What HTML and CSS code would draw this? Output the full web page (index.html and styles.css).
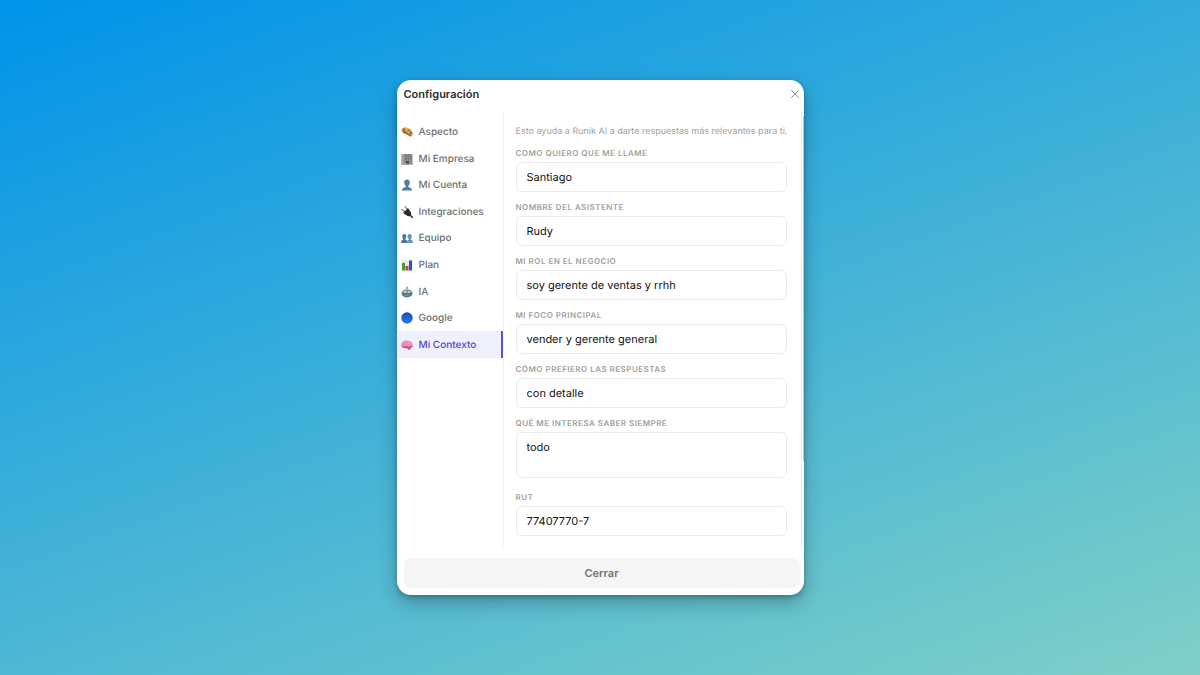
FILE: index.html
```html
<!DOCTYPE html>
<html lang="es">
<head>
    <meta charset="UTF-8">
    <meta name="viewport" content="width=device-width, initial-scale=1.0">
    <title>Configuración</title>
    <link rel="stylesheet" href="styles.css">
</head>
<body>
    <main class="modal">
        <header class="modal-header">
            <h1 class="modal-title">Configuración</h1>
            <button class="modal-close" type="button" aria-label="Cerrar ventana">
                <svg viewBox="0 0 10 10" width="10" height="10"><path d="M1.5 1.5l7 7M8.5 1.5l-7 7" stroke="#8a8a8a" stroke-width="1" fill="none" stroke-linecap="round"/></svg>
            </button>
        </header>

        <div class="modal-body">
            <nav class="tabs">
                <button class="tab" type="button">
                    <svg class="tab-icon" viewBox="0 0 24 24">
                        <path d="M1 7C4 1 13 2 18 6c5 4 7 9 5 13-2 3-6 1-7-1-1-2-1-2-3-2-3 1-6 1-9-2C2 12 0 10 1 7z" fill="#d99a4e"/>
                        <circle cx="6" cy="7" r="2.4" fill="#e5482f"/>
                        <circle cx="11" cy="6" r="2.2" fill="#f4c430"/>
                        <circle cx="16" cy="9" r="2.2" fill="#48a845"/>
                        <circle cx="20" cy="14" r="2.2" fill="#7a4fb0"/>
                        <path d="M6 11l13 9" stroke="#8a4b24" stroke-width="2.4" stroke-linecap="round"/>
                        <path d="M2 9l6 3-3 2z" fill="#4b9b3d"/>
                    </svg>
                    Aspecto
                </button>
                <button class="tab" type="button">
                    <svg class="tab-icon" viewBox="0 0 24 24">
                        <path d="M1 2h22v21H1z" fill="#85888d"/>
                        <path d="M1 2h5v21H1z" fill="#a4a7ab"/>
                        <path d="M8 5h3v3H8zM13 5h3v3h-3zM18 5h2v3h-2zM8 10h3v3H8zM13 10h3v3h-3zM18 10h2v3h-2z" fill="#73777e"/>
                        <path d="M10 16h6v7h-6z" fill="#4a4b51"/>
                        <path d="M0 21h24v2H0z" fill="#a4a19c"/>
                    </svg>
                    Mi Empresa
                </button>
                <button class="tab" type="button">
                    <svg class="tab-icon" viewBox="0 0 24 24">
                        <path d="M12 1c4 0 6 3 5.500 7-.3 3-1.500 5-3 6v2c4 1 7 2 8 7H1.500c1-5 4-6 8-7v-2c-1.500-1-2.700-3-3-6C6 4 8 1 12 1z" fill="#527b9d"/>
                    </svg>
                    Mi Cuenta
                </button>
                <button class="tab" type="button">
                    <svg class="tab-icon" viewBox="0 0 24 24">
                        <path d="M2 7l5 4M8 1l4 5" stroke="#7b7b7b" stroke-width="2.200" stroke-linecap="round"/>
                        <path d="M14 4l6 9c1 3 0 6-2 7-3 1-6 0-8-2l-6-4z" fill="#2c2b2d"/>
                        <path d="M18 18l5 5" stroke="#2c2b2d" stroke-width="3" stroke-linecap="round"/>
                    </svg>
                    Integraciones
                </button>
                <button class="tab" type="button">
                    <svg class="tab-icon" viewBox="0 0 24 24">
                        <path d="M17.500 4c3 0 4 2 4 5 0 2-1 4-2 5v1c3 1 4 2 4.500 7H12c0-5 1-6 4-7v-1c-2-1-3-3-3-5 0-3 1-5 4.500-5z" fill="#6796b6"/>
                        <path d="M6.500 4c3 0 4 2 4 5 0 2-1 4-2 5v1c3 1 4 2 4.500 7H0c.5-5 1.500-6 4.500-7v-1c-1-1-2-3-2-5 0-3 1-5 4-5z" fill="#4b7797"/>
                    </svg>
                    Equipo
                </button>
                <button class="tab" type="button">
                    <svg class="tab-icon" viewBox="0 0 24 24">
                        <path d="M1 1h22v22H1z" fill="#edf0f2"/>
                        <path d="M1 6h22M1 11h22M1 16h22" stroke="#cfd5da"/>
                        <path d="M2 8h6v15H2z" fill="#3c9b3a"/>
                        <path d="M9 14h6v9H9z" fill="#d43b33"/>
                        <path d="M16 3h6v20h-6z" fill="#2656b8"/>
                    </svg>
                    Plan
                </button>
                <button class="tab" type="button">
                    <svg class="tab-icon" viewBox="0 0 24 24">
                        <path d="M12 2v6" stroke="#7c9196" stroke-width="2"/>
                        <circle cx="12" cy="3" r="2" fill="#d28a78"/>
                        <path d="M1 13c1-9 21-9 22 0l-1 4c-2 8-18 8-20 0z" fill="#83a1a6"/>
                        <path d="M1 14h22c0 11-22 11-22 0z" fill="#527880"/>
                        <circle cx="8" cy="12" r="2" fill="#c4dcde"/>
                        <circle cx="16" cy="12" r="2" fill="#c4dcde"/>
                        <path d="M8 18h8" stroke="#7fa0a6" stroke-width="2"/>
                    </svg>
                    IA
                </button>
                <button class="tab" type="button">
                    <svg class="tab-icon" viewBox="0 0 24 24">
                        <defs>
                            <linearGradient id="blueBall" x1="0" y1="0" x2="0" y2="1">
                                <stop offset="0" stop-color="#1649b8"/>
                                <stop offset="1" stop-color="#277df0"/>
                            </linearGradient>
                        </defs>
                        <circle cx="12" cy="12" r="11.500" fill="url(#blueBall)"/>
                    </svg>
                    Google
                </button>
                <button class="tab active" type="button" aria-current="page">
                    <svg class="tab-icon" viewBox="0 0 24 24">
                        <path d="M0 12c0-6 5-9 12-9s12 4 12 10c0 3-2 5-4 5 0 3-3 5-5 4-1-2-2-3-4-3-6 0-11-2-11-7z" fill="#ec9ab9"/>
                        <path d="M1 14c4 2 8-1 11 0s5 2 10-1c2 3-1 5-3 5 0 2-3 4-4 3-2-3-4-3-6-3-4 0-7-1-8-4z" fill="#c9557f"/>
                        <path d="M5 8c3-2 5 1 8-1M12 11c3 1 5-2 8 0M4 12c2-1 4 0 5 1" stroke="#d9779d" stroke-width="1.200" fill="none"/>
                    </svg>
                    Mi Contexto
                </button>
            </nav>

            <form class="panel">
                <p class="hint">Esto ayuda a Runik AI a darte respuestas más relevantes para ti.</p>
                <div class="field">
                    <label class="label" for="llamar">COMO QUIERO QUE ME LLAME</label>
                    <input class="control" id="llamar" type="text" value="Santiago">
                </div>
                <div class="field">
                    <label class="label" for="asistente">NOMBRE DEL ASISTENTE</label>
                    <input class="control" id="asistente" type="text" value="Rudy">
                </div>
                <div class="field">
                    <label class="label" for="rol">MI ROL EN EL NEGOCIO</label>
                    <input class="control" id="rol" type="text" value="soy gerente de ventas y rrhh">
                </div>
                <div class="field">
                    <label class="label" for="foco">MI FOCO PRINCIPAL</label>
                    <input class="control" id="foco" type="text" value="vender y gerente general">
                </div>
                <div class="field">
                    <label class="label" for="respuestas">CÓMO PREFIERO LAS RESPUESTAS</label>
                    <input class="control" id="respuestas" type="text" value="con detalle">
                </div>
                <div class="field field-area">
                    <label class="label" for="interes">QUÉ ME INTERESA SABER SIEMPRE</label>
                    <textarea class="control area" id="interes" rows="2">todo</textarea>
                </div>
                <div class="field">
                    <label class="label" for="rut">RUT</label>
                    <input class="control" id="rut" type="text" value="77407770-7">
                </div>
            </form>

            <div class="scroll-track"><div class="scroll-thumb"></div></div>
        </div>

        <footer class="modal-footer">
            <button class="footer-button" type="button">Cerrar</button>
        </footer>
    </main>
</body>
</html>
```
FILE: styles.css
```css
* {
    margin: 0;
    padding: 0;
    box-sizing: border-box;
}

body {
    font-family: Inter, 'Liberation Sans', sans-serif;
    text-rendering: geometricPrecision;
    background-color: #0093e9;
    background-image: linear-gradient(160deg, #0093e9 0%, #80d0c7 100%);
    min-height: 100vh;
    display: flex;
    align-items: center;
    justify-content: center;
}

button,
input,
textarea {
    font-family: inherit;
    text-rendering: inherit;
}

button {
    border: none;
    background: none;
    cursor: pointer;
}

.modal {
    width: 100%;
    max-width: 407px;
    background: #fff;
    border-radius: 14px;
    overflow: hidden;
    box-shadow: 0 8px 20px rgba(0, 0, 0, 0.25), 0 2px 5px rgba(0, 0, 0, 0.25);
}

.modal-header {
    display: flex;
    align-items: center;
    justify-content: space-between;
    padding: 7px 4px 11px 7px;
}

.modal-title {
    font-size: 11px;
    line-height: 14px;
    font-weight: 600;
    color: #2b2b2b;
}

.modal-close {
    display: flex;
}

.modal-body {
    display: flex;
}

.tabs {
    flex: 0 0 107px;
    display: grid;
    grid-auto-rows: 1fr;
    padding-top: 7px;
    padding-bottom: 189px;
    border-right: 1px solid #f3f3f3;
}

.tab {
    display: flex;
    align-items: center;
    gap: 6px;
    padding: 0 4px;
    font-size: 10px;
    font-weight: 500;
    color: #6f6f6f;
    text-align: left;
}

.tab-icon {
    width: 12px;
    height: 12px;
    flex: none;
}

.tab.active {
    color: #5546c8;
    background: #eef0fe;
    border-right: 2px solid #5b50c4;
}

.panel {
    flex: 1;
    min-width: 0;
    padding: 14px 14px 11px 12px;
}

.hint {
    margin-bottom: 10px;
    font-size: 9px;
    line-height: 12px;
    color: #a0a0a0;
    white-space: nowrap;
}

.field {
    display: flex;
    flex-direction: column;
    gap: 4px;
    margin-bottom: 10px;
}

.field-area {
    margin-bottom: 14px;
}

.field:last-child {
    margin-bottom: 0;
}

.label {
    font-size: 8px;
    line-height: 10px;
    font-weight: 600;
    letter-spacing: 0.06em;
    color: #a0a0a0;
}

.control {
    width: 100%;
    padding: 7px 10px;
    border: 1px solid #ebebeb;
    border-radius: 6px;
    background: #fff;
    font-size: 11px;
    line-height: 14px;
    color: #111;
    outline: none;
}

.area {
    height: 46px;
    resize: none;
}

.scroll-track {
    flex: 0 0 3px;
    padding-top: 4px;
    border-left: 1px solid #ebebeb;
}

.scroll-thumb {
    width: 1px;
    height: 80%;
    margin-left: auto;
    background: #c4c4c4;
}

.modal-footer {
    padding: 11px 4px 7px 7px;
}

.footer-button {
    display: block;
    width: 100%;
    padding: 8px;
    border-radius: 7px;
    background: #f5f5f5;
    font-size: 11px;
    line-height: 14px;
    font-weight: 600;
    color: #737373;
}
```
